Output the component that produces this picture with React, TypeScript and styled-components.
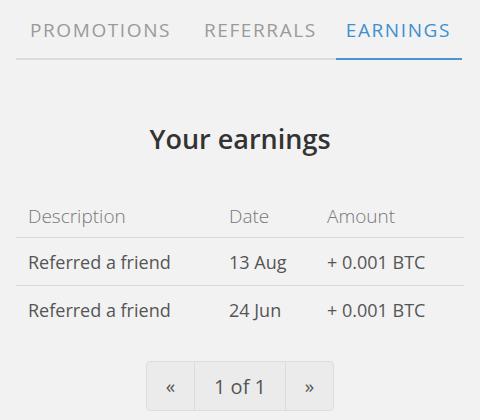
import styled, { createGlobalStyle } from 'styled-components';

const GlobalStyle = createGlobalStyle`
  html, body {
    margin: 0;
    padding: 0;
    background: #f2f2f2;
    font-family: 'Open Sans', 'Liberation Sans', sans-serif;
  }
`;

const tabs = ['Promotions', 'Referrals', 'Earnings'];
const rows = [
  { desc: 'Referred a friend', date: '13 Aug', amount: '+ 0.001 BTC' },
  { desc: 'Referred a friend', date: '24 Jun', amount: '+ 0.001 BTC' },
];

export default function App() {
  return (
    <Page>
      <GlobalStyle />
      <TabBar>
        {tabs.map((t, i) => (
          <Tab key={t} active={i === 2}>
            {t}
          </Tab>
        ))}
      </TabBar>
      <Title>Your earnings</Title>
      <Table>
        <thead>
          <tr>
            <Th>Description</Th>
            <Th>Date</Th>
            <Th>Amount</Th>
          </tr>
        </thead>
        <tbody>
          {rows.map((r, i) => (
            <Row key={i}>
              <Td>{r.desc}</Td>
              <Td>{r.date}</Td>
              <Td>{r.amount}</Td>
            </Row>
          ))}
        </tbody>
      </Table>
      <Pager>
        <PageBtn>«</PageBtn>
        <PageInfo>1 of 1</PageInfo>
        <PageBtn>»</PageBtn>
      </Pager>
    </Page>
  );
}

const Page = styled.div`
  width: 480px;
  height: 420px;
  padding: 0 16px;
  box-sizing: border-box;
  overflow: hidden;
`;

const TabBar = styled.div`
  display: flex;
  justify-content: space-between;
  border-bottom: 2px solid #dcdcdc;
  height: 60px;
  box-sizing: border-box;
  margin-right: 2px;
`;

const Tab = styled.div<{ active?: boolean }>`
  padding: 17px 12px 0 14px;
  font-size: 19px;
  letter-spacing: 1.6px;
  text-transform: uppercase;
  color: ${(p) => (p.active ? '#3d8fd1' : '#9a9a9a')};
  border-bottom: 2px solid ${(p) => (p.active ? '#4a95d4' : 'transparent')};
  margin-bottom: -2px;
  &:last-child {
    padding-left: 10px;
    padding-right: 11px;
  }
`;

const Title = styled.h2`
  margin: 61px 0 0;
  text-align: center;
  font-size: 27px;
  font-weight: 600;
  color: #333;
  line-height: 36px;
`;

const Table = styled.table`
  width: 448px;
  margin-top: 34px;
  border-collapse: collapse;
`;

const Th = styled.th`
  text-align: left;
  font-weight: 300;
  font-size: 19px;
  color: #777;
  padding: 0 0 8px 12px;
  height: 38px;
  vertical-align: bottom;
  border-bottom: 1px solid #d8d8d8;
  &:nth-child(1) { width: 189px; }
  &:nth-child(2) { width: 86px; }
`;

const Row = styled.tr`
  & + & td {
    border-top: 1px solid #d8d8d8;
  }
`;

const Td = styled.td`
  padding: 0 0 0 12px;
  height: 47px;
  font-size: 18px;
  color: #555;
`;

const Pager = styled.div`
  display: flex;
  width: 188px;
  height: 50px;
  margin: 28px auto 0;
  border: 1px solid #dcdcdc;
  border-radius: 4px;
  background: #ebebeb;
  box-sizing: border-box;
`;

const PageBtn = styled.div`
  width: 47px;
  display: flex;
  align-items: center;
  justify-content: center;
  font-size: 19px;
  color: #555;
`;

const PageInfo = styled.div`
  flex: 1;
  display: flex;
  align-items: center;
  justify-content: center;
  font-size: 20px;
  color: #555;
  border-left: 1px solid #dcdcdc;
  border-right: 1px solid #dcdcdc;
`;
